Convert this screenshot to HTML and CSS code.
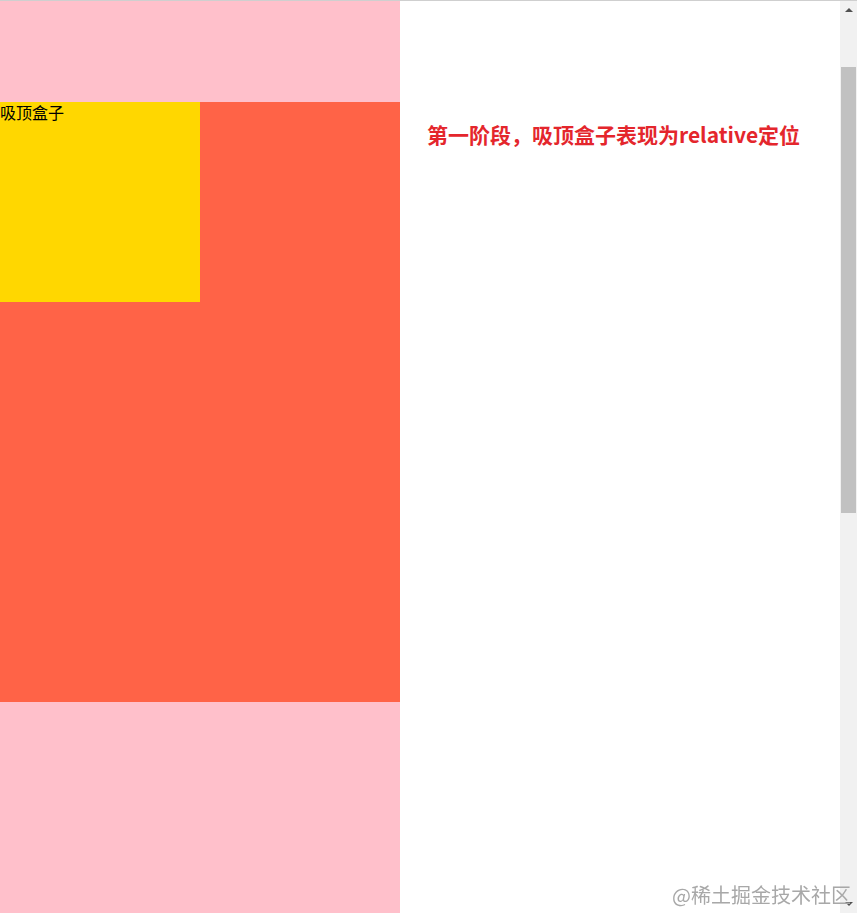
FILE: index.html
```html
<!DOCTYPE html>
<html lang="zh">
<head>
<meta charset="utf-8">
<title>吸顶盒子</title>
<link rel="stylesheet" href="styles.css">
</head>
<body>
<div class="page">
  <div class="left">
    <div class="spacer"></div>
    <div class="parent">
      <div class="sticky">吸顶盒子</div>
    </div>
    <div class="spacer-bottom"></div>
  </div>
  <div class="right">
    <h2 class="tip">第一阶段，吸顶盒子表现为relative定位</h2>
  </div>
</div>
<div class="scrollbar">
  <div class="arrow up"></div>
  <div class="thumb"></div>
  <div class="arrow down"></div>
</div>
<div class="watermark">@稀土掘金技术社区</div>
</body>
</html>
```
FILE: styles.css
```css
html, body {
  margin: 0;
  padding: 0;
  height: 913px;
  overflow: hidden;
  background: #ffffff;
}
body {
  border-top: 1px solid #cfcfcf;
  box-sizing: border-box;
  font-family: "Noto Sans CJK SC", "Microsoft YaHei", sans-serif;
}
.page {
  display: flex;
  height: 912px;
}
.left {
  width: 400px;
  background: #ffc0cb;
  flex: none;
  display: flex;
  flex-direction: column;
}
.spacer {
  height: 101px;
  flex: none;
}
.parent {
  height: 600px;
  background: #ff6347;
  flex: none;
}
.sticky {
  width: 200px;
  height: 200px;
  background: #ffd700;
  font-size: 16px;
  line-height: 20px;
  color: #000;
}
.spacer-bottom {
  flex: 1;
}
.right {
  flex: 1;
  padding: 118px 0 0 27px;
}
.tip {
  margin: 0;
  font-size: 21px;
  line-height: 30px;
  font-weight: 700;
  color: #e4262c;
}
.scrollbar {
  position: fixed;
  top: 1px;
  right: 0;
  width: 17px;
  bottom: 0;
  background: #f1f1f1;
  display: flex;
  flex-direction: column;
  align-items: center;
}
.arrow {
  height: 17px;
  width: 17px;
  flex: none;
  position: relative;
}
.arrow::after {
  content: "";
  position: absolute;
  left: 5px;
  width: 0;
  height: 0;
  border-left: 4px solid transparent;
  border-right: 4px solid transparent;
}
.arrow.up::after {
  top: 7px;
  border-bottom: 4px solid #505050;
}
.arrow.down::after {
  top: 6px;
  border-top: 4px solid #505050;
}
.thumb {
  margin-top: 49px;
  width: 15px;
  height: 446px;
  background: #c1c1c1;
  flex: none;
}
.down {
  margin-top: auto;
}
.watermark {
  position: fixed;
  right: 6px;
  bottom: 6px;
  font-size: 20px;
  line-height: 24px;
  color: #a8a8a8;
  font-family: "Noto Sans CJK SC", sans-serif;
}
```
